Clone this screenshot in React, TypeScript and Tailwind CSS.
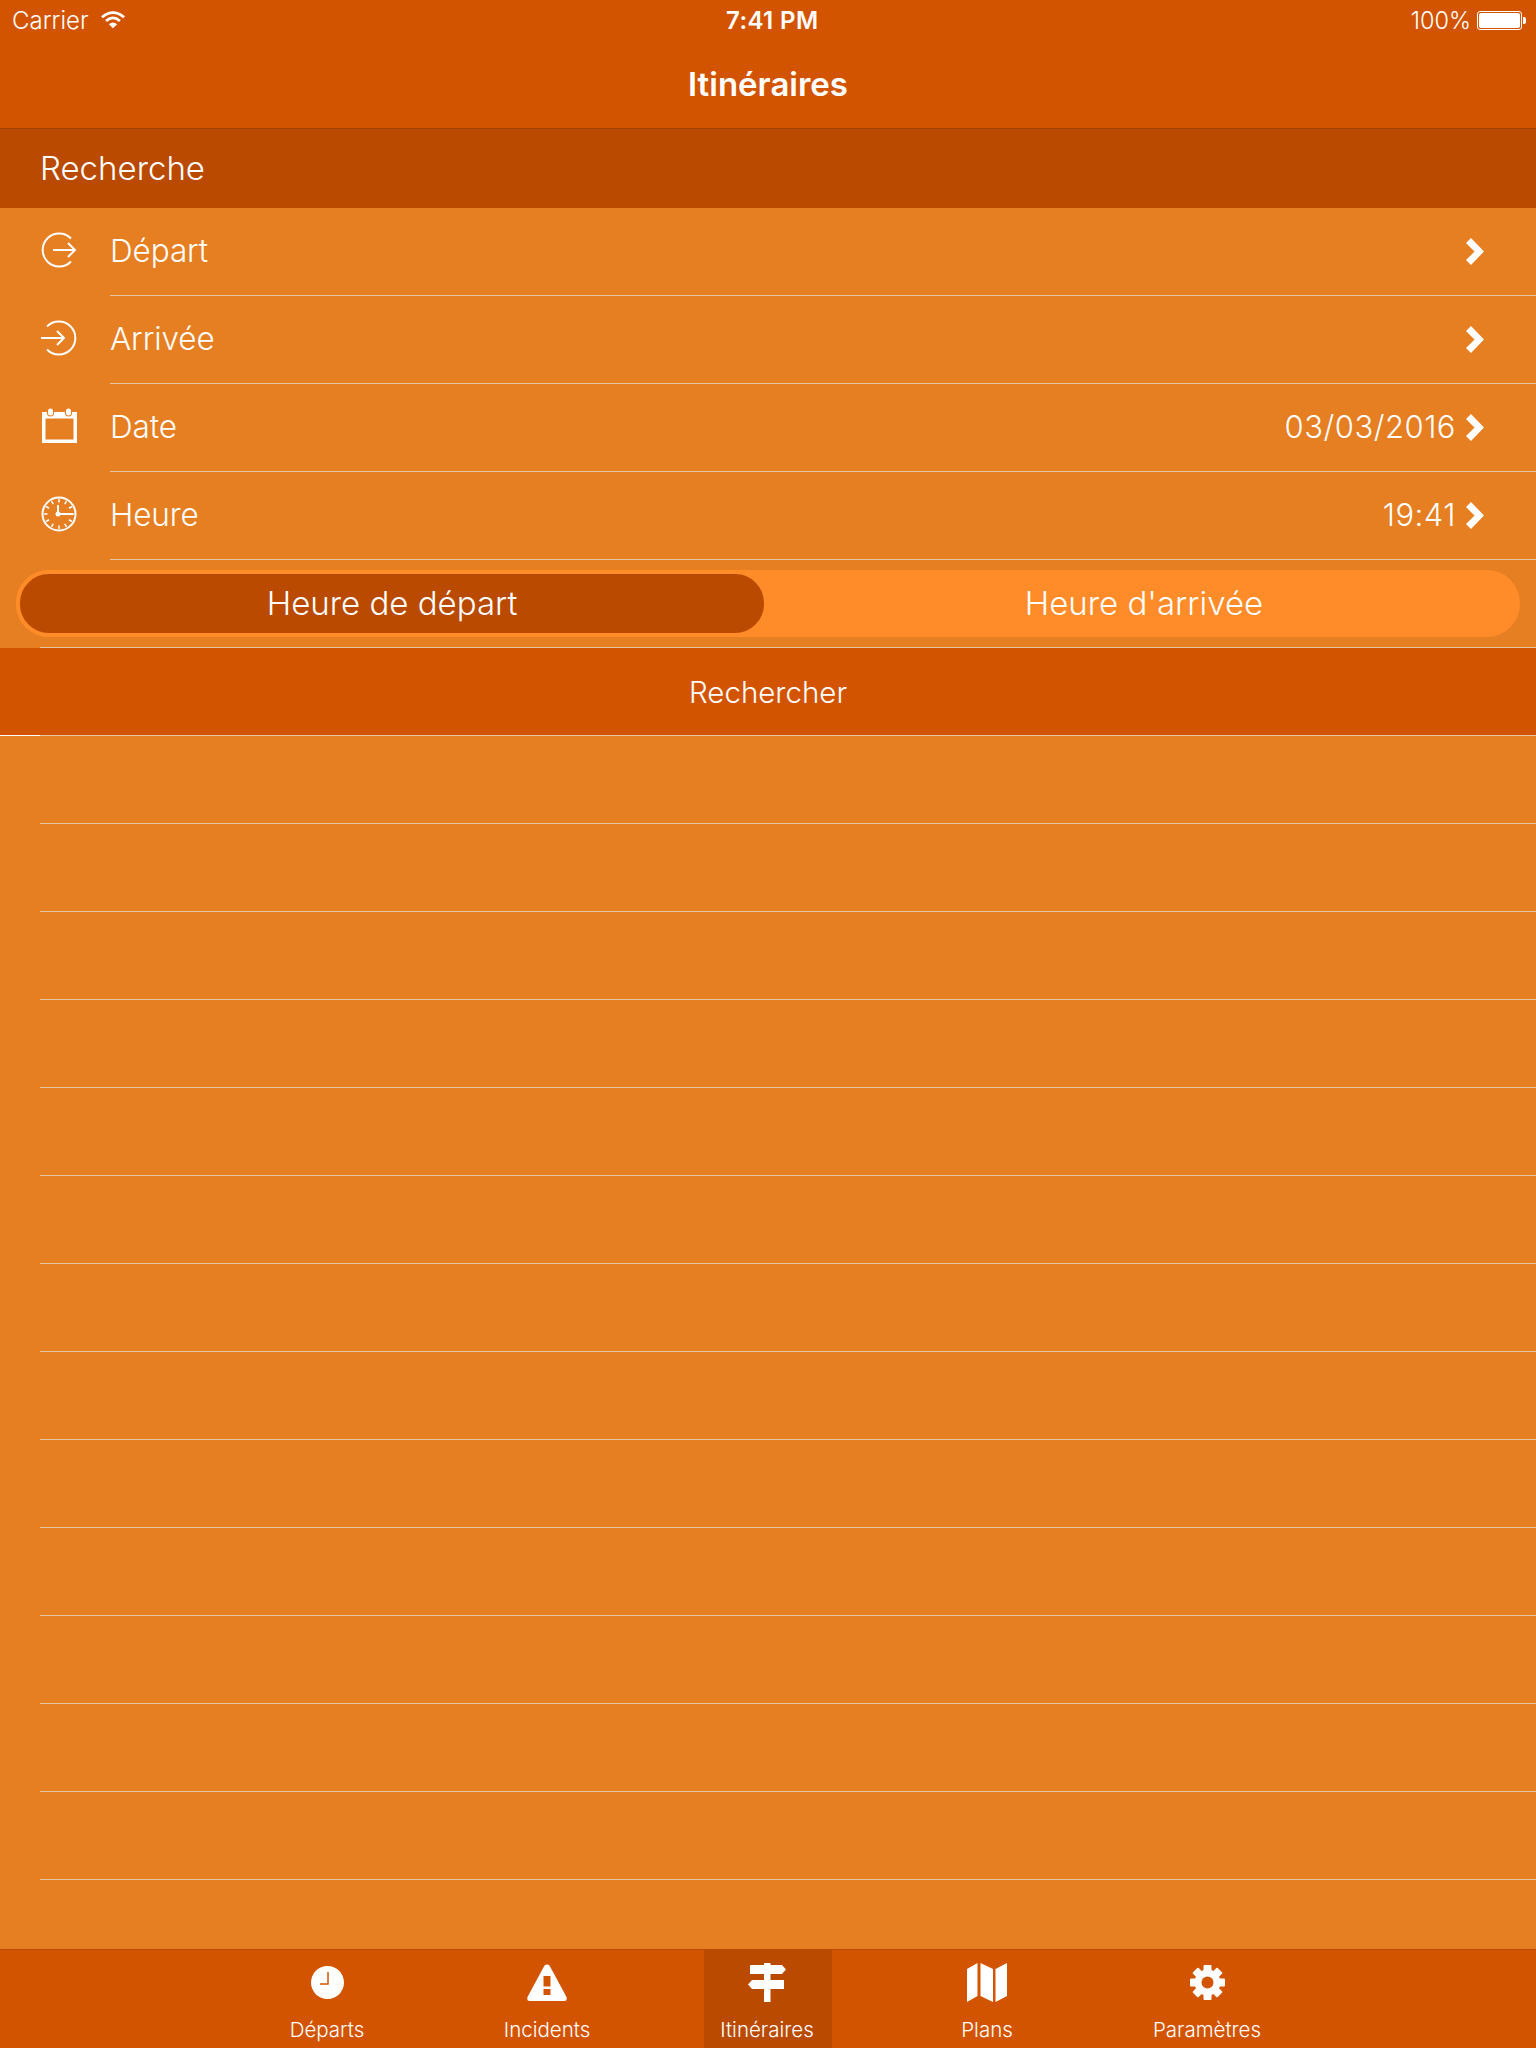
const font = "font-['Inter','Liberation_Sans',sans-serif]";

function Chevron() {
  return (
    <svg width="18" height="27" viewBox="0 0 18 27" className="shrink-0">
      <path d="M0 5 L5 0 L18 13.500 L5 27 L0 22 L8.500 13.500 Z" fill="#fff" />
    </svg>
  );
}

function ExitIcon() {
  return (
    <svg width="36" height="36" viewBox="0 0 36 36" fill="none" stroke="#fff" strokeWidth="2">
      <path d="M30 6.500 A16.500 16.500 0 1 0 30 29.500" />
      <path d="M12 18 H34 M27 11 L34 18 L27 25" />
    </svg>
  );
}

function EnterIcon() {
  return (
    <svg width="36" height="36" viewBox="0 0 36 36" fill="none" stroke="#fff" strokeWidth="2">
      <path d="M6 6.500 A16.500 16.500 0 1 1 6 29.500" />
      <path d="M0 18 H23 M16 11 L23 18 L16 25" />
    </svg>
  );
}

function CalendarIcon() {
  return (
    <svg width="36" height="36" viewBox="0 0 36 36">
      <path d="M1 4 H36 V35 H1 Z M4.500 10.500 V31.500 H32.500 V10.500 Z" fill="#fff" fillRule="evenodd" />
      <rect x="6" y="0" width="7" height="8.500" rx="3.500" fill="#e67e22" />
      <rect x="7" y="0.500" width="5" height="7" rx="2.500" fill="#fff" />
      <rect x="24" y="0" width="7" height="8.500" rx="3.500" fill="#e67e22" />
      <rect x="25" y="0.500" width="5" height="7" rx="2.500" fill="#fff" />
    </svg>
  );
}

function ClockIcon() {
  const ticks = [0, 30, 60, 90, 120, 150, 180, 210, 240, 270, 300, 330];
  return (
    <svg width="36" height="36" viewBox="0 0 36 36" fill="none" stroke="#fff">
      <circle cx="18" cy="18" r="16.500" strokeWidth="2" />
      {ticks.map((a) => (
        <line key={a} x1="18" y1="3" x2="18" y2="6.500" strokeWidth="1.500" transform={`rotate(${a} 18 18)`} />
      ))}
      <path d="M17 9 V18 H32" strokeWidth="2" />
      <circle cx="17" cy="18" r="2.500" fill="#fff" stroke="none" />
    </svg>
  );
}

function DepartsIcon() {
  return (
    <svg width="33" height="33" viewBox="0 0 33 33">
      <circle cx="16.500" cy="16.500" r="16.500" fill="#fff" />
      <path d="M17 6 V18 H9" fill="none" stroke="#d35400" strokeWidth="1.500" />
    </svg>
  );
}

function IncidentsIcon() {
  return (
    <svg width="40" height="37" viewBox="0 0 40 37">
      <path
        d="M17.500 1.500 Q20 -0.500 22.500 1.500 L39.500 33 Q40.500 37 37.500 37 H2.500 Q-0.500 37 0.500 33 Z M16.500 12 V22.500 H23.500 V12 Z M16.500 25 V31 H23.500 V25 Z"
        fill="#fff"
        fillRule="evenodd"
      />
    </svg>
  );
}

function SignpostIcon() {
  return (
    <svg width="38" height="39" viewBox="0 0 38 39" fill="#fff">
      <path d="M16 0 H22.500 V2 H34 L38 6.500 L34 11 H2 V2 H16 Z" />
      <path d="M16 11 H22.500 V17 H36 V26 H4 L0 21.500 L4 17 H16 Z" />
      <rect x="16" y="26" width="6.500" height="13" />
    </svg>
  );
}

function MapIcon() {
  return (
    <svg width="40" height="39" viewBox="0 0 40 39" fill="#fff">
      <path d="M0 6 L10.500 0 V33 L0 39 Z" />
      <path d="M13.500 0 L26 6 V39 L13.500 33 Z" />
      <path d="M28.500 6 L40 0 V33 L28.500 39 Z" />
    </svg>
  );
}

function GearIcon() {
  const teeth = [0, 45, 90, 135, 180, 225, 270, 315];
  return (
    <svg width="35" height="35" viewBox="0 0 35 35" fill="#fff">
      <circle cx="17.500" cy="17.500" r="13" />
      {teeth.map((a) => (
        <rect key={a} x="13.500" y="0" width="8" height="8" rx="1" transform={`rotate(${a} 17.500 17.500)`} />
      ))}
      <circle cx="17.500" cy="17.500" r="6" fill="#d35400" />
    </svg>
  );
}

function Row({ icon, label, value }: { icon: React.ReactNode; label: string; value?: string }) {
  return (
    <div className="flex h-[88px] items-center pl-[41px]">
      <div className="mb-[4px] w-[36px] shrink-0">{icon}</div>
      <div className="ml-[33px] flex h-full flex-1 items-center border-b border-[#e8c4a6] pr-[52px]">
        <span className="mb-[2px] flex-1 text-[31.500px] leading-none tracking-[-0.1px]">{label}</span>
        {value && <span className="mb-[2px] mr-[10px] text-[31px] leading-none tracking-[0.5px]">{value}</span>}
        <Chevron />
      </div>
    </div>
  );
}

function Tab({ icon, label, active }: { icon: React.ReactNode; label: string; active?: boolean }) {
  return (
    <div className={`flex h-full w-[128px] flex-col items-center pr-[2px] ${active ? 'bg-[#b94a00]' : ''}`}>
      <div className="flex h-[65px] items-center">{icon}</div>
      <span className="mt-[5px] whitespace-nowrap text-[20.500px] leading-none">{label}</span>
    </div>
  );
}

export default function App() {
  return (
    <div className={`flex h-[2048px] w-[1536px] flex-col overflow-hidden bg-[#e67e22] font-[350] text-white ${font}`}>
      <div className="h-[129px] shrink-0 border-b border-[#9a4000] bg-[#d35400]">
        <div className="relative flex h-[40px] items-center justify-between pl-[12px] pr-[10px] pt-[2px] leading-none">
          <div className="flex items-center gap-[12px] text-[24px]">
            <span>Carrier</span>
            <svg width="24" height="20" viewBox="0 0 26 20" fill="none" stroke="#fff" strokeWidth="3" className="-mt-[2px]">
              <path d="M1 7 Q13 -3 25 7" />
              <path d="M5.500 11 Q13 4.500 20.500 11" />
              <path d="M13 19 L8.500 14.500 Q13 11 17.500 14.500 Z" fill="#fff" stroke="none" />
            </svg>
          </div>
          <span className="absolute left-[726px] text-[24px] font-semibold tracking-[0.4px]">7:41 PM</span>
          <div className="flex items-center gap-[6px] text-[23.500px]">
            <span>100%</span>
            <div className="-mt-[2px] flex items-center">
              <div className="h-[19px] w-[45px] rounded-[3px] border border-white p-[1px]">
                <div className="h-full w-full rounded-[2px] bg-white" />
              </div>
              <div className="ml-[1px] h-[7px] w-[3px] rounded-r-[2px] bg-white" />
            </div>
          </div>
        </div>
        <div className="flex h-[88px] items-center justify-center text-[33px] font-semibold leading-none">Itinéraires</div>
      </div>

      <div className="flex h-[79px] shrink-0 items-center bg-[#b94a00] pl-[40px] text-[33px] leading-none">Recherche</div>

      <Row icon={<ExitIcon />} label="Départ" />
      <Row icon={<EnterIcon />} label="Arrivée" />
      <Row icon={<CalendarIcon />} label="Date" value="03/03/2016" />
      <Row icon={<ClockIcon />} label="Heure" value="19:41" />

      <div className="ml-[40px] h-[88px] shrink-0 border-b border-[#e8c4a6]">
        <div className="-ml-[24px] mt-[10px] flex h-[67px] w-[1504px] rounded-[33px] bg-[#ff8c28] text-[33px] leading-none">
          <div className="flex w-[752px] items-center justify-center rounded-[33px] border-4 border-[#ff8c28] bg-[#b94a00]">Heure de départ</div>
          <div className="flex flex-1 items-center justify-center">Heure d'arrivée</div>
        </div>
      </div>

      <div className="relative flex h-[88px] shrink-0 items-center justify-center border-b border-[#e8c4a6] bg-[#d35400] pt-[2px] text-[29.500px] leading-none">
        Rechercher
        <div className="absolute bottom-[-1px] left-0 h-px w-[40px] bg-white" />
      </div>

      <div className="flex-1 pl-[40px]">
        {Array.from({ length: 13 }).map((_, i) => (
          <div key={i} className="h-[88px] border-b border-[#e8c4a6]" />
        ))}
      </div>

      <div className="flex h-[99px] shrink-0 justify-center gap-[92px] border-t border-[#b94a00] bg-[#d35400]">
        <Tab icon={<DepartsIcon />} label="Départs" />
        <Tab icon={<IncidentsIcon />} label="Incidents" />
        <Tab icon={<SignpostIcon />} label="Itinéraires" active />
        <Tab icon={<MapIcon />} label="Plans" />
        <Tab icon={<GearIcon />} label="Paramètres" />
      </div>
    </div>
  );
}
